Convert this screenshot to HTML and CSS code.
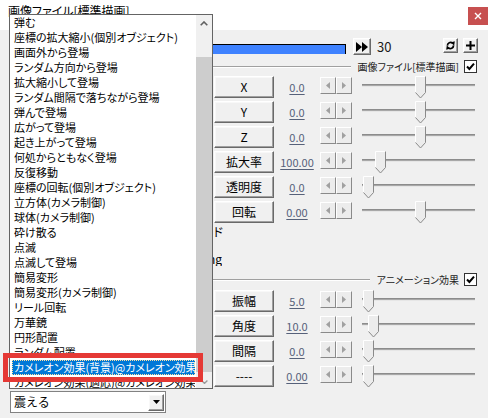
FILE: index.html
```html
<!DOCTYPE html>
<html lang="ja">
<head>
<meta charset="utf-8">
<title>画像ファイル[標準描画]</title>
<link rel="stylesheet" href="styles.css">
</head>
<body>
<div class="window">
  <div class="titlebar">
    <span class="title">画像ファイル[標準描画]</span>
    <div class="close"><svg width="8" height="8" viewBox="0 0 8 8"><path d="M1 1L7 7M7 1L1 7" stroke="#fff" stroke-width="1.4"/></svg></div>
  </div>
  <div class="content">
    <div class="tl-row">
      <div class="tl-bar"></div>
      <div class="raised ff"><svg width="12" height="10" viewBox="0 0 12 10"><polygon points="0,0 6,5 0,10" fill="#000"/><polygon points="6,0 12,5 6,10" fill="#000"/></svg></div>
      <span class="frame">30</span>
      <div class="spacer"></div>
      <div class="raised sbtn"><svg width="9" height="11" viewBox="0 0 9 11"><path d="M1.4 5.6A3.2 3.2 0 0 1 6.6 3.2" fill="none" stroke="#000" stroke-width="1.7"/><polygon points="4.6,2.6 8.8,1.2 8.2,5.4" fill="#000"/><path d="M7.6 5.4A3.2 3.2 0 0 1 2.4 7.8" fill="none" stroke="#000" stroke-width="1.7"/><polygon points="4.4,8.4 0.2,9.8 0.8,5.6" fill="#000"/></svg></div>
      <div class="raised sbtn plus"><svg width="9" height="9" viewBox="0 0 9 9"><path d="M4.5 0V9M0 4.5H9" stroke="#000" stroke-width="2"/></svg></div>
    </div>

    <div class="sep">
      <div class="sep-line"></div>
      <span class="sep-label">画像ファイル[標準描画]</span>
      <span class="check"><svg width="13" height="13" viewBox="0 0 13 13"><rect x="0.5" y="0.5" width="12" height="12" fill="#fff" stroke="#333"/><path d="M3 6.5L5.4 9L10 3.6" fill="none" stroke="#000" stroke-width="2"/></svg></span>
    </div>

    <div class="prow first">
      <div class="raised pbtn">X</div><span class="pval">0.0</span>
      <div class="arrows"><span class="arr"><svg width="4" height="7"><polygon points="4,0 0,3.5 4,7" fill="#a0a0a0"/></svg></span><span class="arr"><svg width="4" height="7"><polygon points="0,0 4,3.5 0,7" fill="#a0a0a0"/></svg></span></div>
      <div class="slider"><div class="track"></div><svg class="thumb" style="left:53px" width="11" height="23" viewBox="0 0 11 23"><polygon points="0.5,0.5 10.5,0.5 10.5,16.5 5.5,22 0.5,16.5" fill="#ececec"/><polyline points="0.5,16.5 0.5,0.5 10.5,0.5" fill="none" stroke="#fff"/><polyline points="10.5,0.5 10.5,16.5 5.5,22 0.5,16.5" fill="none" stroke="#8a8a8a"/></svg></div>
    </div>
    <div class="prow">
      <div class="raised pbtn">Y</div><span class="pval">0.0</span>
      <div class="arrows"><span class="arr"><svg width="4" height="7"><polygon points="4,0 0,3.5 4,7" fill="#a0a0a0"/></svg></span><span class="arr"><svg width="4" height="7"><polygon points="0,0 4,3.5 0,7" fill="#a0a0a0"/></svg></span></div>
      <div class="slider"><div class="track"></div><svg class="thumb" style="left:53px" width="11" height="23" viewBox="0 0 11 23"><polygon points="0.5,0.5 10.5,0.5 10.5,16.5 5.5,22 0.5,16.5" fill="#ececec"/><polyline points="0.5,16.5 0.5,0.5 10.5,0.5" fill="none" stroke="#fff"/><polyline points="10.5,0.5 10.5,16.5 5.5,22 0.5,16.5" fill="none" stroke="#8a8a8a"/></svg></div>
    </div>
    <div class="prow">
      <div class="raised pbtn">Z</div><span class="pval">0.0</span>
      <div class="arrows"><span class="arr"><svg width="4" height="7"><polygon points="4,0 0,3.5 4,7" fill="#a0a0a0"/></svg></span><span class="arr"><svg width="4" height="7"><polygon points="0,0 4,3.5 0,7" fill="#a0a0a0"/></svg></span></div>
      <div class="slider"><div class="track"></div><svg class="thumb" style="left:53px" width="11" height="23" viewBox="0 0 11 23"><polygon points="0.5,0.5 10.5,0.5 10.5,16.5 5.5,22 0.5,16.5" fill="#ececec"/><polyline points="0.5,16.5 0.5,0.5 10.5,0.5" fill="none" stroke="#fff"/><polyline points="10.5,0.5 10.5,16.5 5.5,22 0.5,16.5" fill="none" stroke="#8a8a8a"/></svg></div>
    </div>
    <div class="prow">
      <div class="raised pbtn">拡大率</div><span class="pval">100.00</span>
      <div class="arrows"><span class="arr"><svg width="4" height="7"><polygon points="4,0 0,3.5 4,7" fill="#a0a0a0"/></svg></span><span class="arr"><svg width="4" height="7"><polygon points="0,0 4,3.5 0,7" fill="#a0a0a0"/></svg></span></div>
      <div class="slider"><div class="track"></div><svg class="thumb" style="left:13px" width="11" height="23" viewBox="0 0 11 23"><polygon points="0.5,0.5 10.5,0.5 10.5,16.5 5.5,22 0.5,16.5" fill="#ececec"/><polyline points="0.5,16.5 0.5,0.5 10.5,0.5" fill="none" stroke="#fff"/><polyline points="10.5,0.5 10.5,16.5 5.5,22 0.5,16.5" fill="none" stroke="#8a8a8a"/></svg></div>
    </div>
    <div class="prow">
      <div class="raised pbtn">透明度</div><span class="pval">0.0</span>
      <div class="arrows"><span class="arr"><svg width="4" height="7"><polygon points="4,0 0,3.5 4,7" fill="#a0a0a0"/></svg></span><span class="arr"><svg width="4" height="7"><polygon points="0,0 4,3.5 0,7" fill="#a0a0a0"/></svg></span></div>
      <div class="slider"><div class="track"></div><svg class="thumb" style="left:1px" width="11" height="23" viewBox="0 0 11 23"><polygon points="0.5,0.5 10.5,0.5 10.5,16.5 5.5,22 0.5,16.5" fill="#ececec"/><polyline points="0.5,16.5 0.5,0.5 10.5,0.5" fill="none" stroke="#fff"/><polyline points="10.5,0.5 10.5,16.5 5.5,22 0.5,16.5" fill="none" stroke="#8a8a8a"/></svg></div>
    </div>
    <div class="prow">
      <div class="raised pbtn">回転</div><span class="pval">0.00</span>
      <div class="arrows"><span class="arr"><svg width="4" height="7"><polygon points="4,0 0,3.5 4,7" fill="#a0a0a0"/></svg></span><span class="arr"><svg width="4" height="7"><polygon points="0,0 4,3.5 0,7" fill="#a0a0a0"/></svg></span></div>
      <div class="slider"><div class="track"></div><svg class="thumb" style="left:53px" width="11" height="23" viewBox="0 0 11 23"><polygon points="0.5,0.5 10.5,0.5 10.5,16.5 5.5,22 0.5,16.5" fill="#ececec"/><polyline points="0.5,16.5 0.5,0.5 10.5,0.5" fill="none" stroke="#fff"/><polyline points="10.5,0.5 10.5,16.5 5.5,22 0.5,16.5" fill="none" stroke="#8a8a8a"/></svg></div>
    </div>

    <div class="trow t1"><span class="tbox">合成モード</span></div>
    <div class="trow t2"><span class="tbox tbox2">sample.png</span></div>

    <div class="sep sep2">
      <div class="sep-line"></div>
      <span class="sep-label">アニメーション効果</span>
      <span class="check"><svg width="13" height="13" viewBox="0 0 13 13"><rect x="0.5" y="0.5" width="12" height="12" fill="#fff" stroke="#333"/><path d="M3 6.5L5.4 9L10 3.6" fill="none" stroke="#000" stroke-width="2"/></svg></span>
    </div>

    <div class="prow first2">
      <div class="raised pbtn">振幅</div><span class="pval">5.0</span>
      <div class="arrows"><span class="arr"><svg width="4" height="7"><polygon points="4,0 0,3.5 4,7" fill="#a0a0a0"/></svg></span><span class="arr"><svg width="4" height="7"><polygon points="0,0 4,3.5 0,7" fill="#a0a0a0"/></svg></span></div>
      <div class="slider"><div class="track"></div><svg class="thumb" style="left:1px" width="11" height="23" viewBox="0 0 11 23"><polygon points="0.5,0.5 10.5,0.5 10.5,16.5 5.5,22 0.5,16.5" fill="#ececec"/><polyline points="0.5,16.5 0.5,0.5 10.5,0.5" fill="none" stroke="#fff"/><polyline points="10.5,0.5 10.5,16.5 5.5,22 0.5,16.5" fill="none" stroke="#8a8a8a"/></svg></div>
    </div>
    <div class="prow">
      <div class="raised pbtn">角度</div><span class="pval">10.0</span>
      <div class="arrows"><span class="arr"><svg width="4" height="7"><polygon points="4,0 0,3.5 4,7" fill="#a0a0a0"/></svg></span><span class="arr"><svg width="4" height="7"><polygon points="0,0 4,3.5 0,7" fill="#a0a0a0"/></svg></span></div>
      <div class="slider"><div class="track"></div><svg class="thumb" style="left:6px" width="11" height="23" viewBox="0 0 11 23"><polygon points="0.5,0.5 10.5,0.5 10.5,16.5 5.5,22 0.5,16.5" fill="#ececec"/><polyline points="0.5,16.5 0.5,0.5 10.5,0.5" fill="none" stroke="#fff"/><polyline points="10.5,0.5 10.5,16.5 5.5,22 0.5,16.5" fill="none" stroke="#8a8a8a"/></svg></div>
    </div>
    <div class="prow">
      <div class="raised pbtn">間隔</div><span class="pval">0.0</span>
      <div class="arrows"><span class="arr"><svg width="4" height="7"><polygon points="4,0 0,3.5 4,7" fill="#a0a0a0"/></svg></span><span class="arr"><svg width="4" height="7"><polygon points="0,0 4,3.5 0,7" fill="#a0a0a0"/></svg></span></div>
      <div class="slider"><div class="track"></div><svg class="thumb" style="left:1px" width="11" height="23" viewBox="0 0 11 23"><polygon points="0.5,0.5 10.5,0.5 10.5,16.5 5.5,22 0.5,16.5" fill="#ececec"/><polyline points="0.5,16.5 0.5,0.5 10.5,0.5" fill="none" stroke="#fff"/><polyline points="10.5,0.5 10.5,16.5 5.5,22 0.5,16.5" fill="none" stroke="#8a8a8a"/></svg></div>
    </div>
    <div class="prow">
      <div class="raised pbtn">----</div><span class="pval">0.00</span>
      <div class="arrows"><span class="arr"><svg width="4" height="7"><polygon points="4,0 0,3.5 4,7" fill="#a0a0a0"/></svg></span><span class="arr"><svg width="4" height="7"><polygon points="0,0 4,3.5 0,7" fill="#a0a0a0"/></svg></span></div>
      <div class="slider"><div class="track"></div><svg class="thumb" style="left:1px" width="11" height="23" viewBox="0 0 11 23"><polygon points="0.5,0.5 10.5,0.5 10.5,16.5 5.5,22 0.5,16.5" fill="#ececec"/><polyline points="0.5,16.5 0.5,0.5 10.5,0.5" fill="none" stroke="#fff"/><polyline points="10.5,0.5 10.5,16.5 5.5,22 0.5,16.5" fill="none" stroke="#8a8a8a"/></svg></div>
    </div>

    <div class="combo-row">
      <div class="combo">
        <span class="combo-text">震える</span>
        <span class="raised combo-btn"><svg width="7" height="4" viewBox="0 0 7 4"><polygon points="0,0 7,0 3.5,4" fill="#000"/></svg></span>
      </div>
    </div>
  </div>

  <div class="popup">
    <div class="list">
      <div class="item">弾む</div>
      <div class="item">座標の拡大縮小(個別オブジェクト)</div>
      <div class="item">画面外から登場</div>
      <div class="item">ランダム方向から登場</div>
      <div class="item">拡大縮小して登場</div>
      <div class="item">ランダム間隔で落ちながら登場</div>
      <div class="item">弾んで登場</div>
      <div class="item">広がって登場</div>
      <div class="item">起き上がって登場</div>
      <div class="item">何処からともなく登場</div>
      <div class="item">反復移動</div>
      <div class="item">座標の回転(個別オブジェクト)</div>
      <div class="item">立方体(カメラ制御)</div>
      <div class="item">球体(カメラ制御)</div>
      <div class="item">砕け散る</div>
      <div class="item">点滅</div>
      <div class="item">点滅して登場</div>
      <div class="item">簡易変形</div>
      <div class="item">簡易変形(カメラ制御)</div>
      <div class="item">リール回転</div>
      <div class="item">万華鏡</div>
      <div class="item">円形配置</div>
      <div class="item">ランダム配置</div>
      <div class="item sel">カメレオン効果(背景)@カメレオン効果</div>
      <div class="item">カメレオン効果(適応)@カメレオン効果</div>
    </div>
    <div class="sbar">
      <div class="sb-up"><svg width="8" height="5" viewBox="0 0 8 5"><polyline points="0.7,4.3 4,1 7.3,4.3" fill="none" stroke="#606060" stroke-width="1.6"/></svg></div>
      <div class="sb-thumb"></div>
      <div class="sb-down"><svg width="7" height="4" viewBox="0 0 7 4"><polyline points="0.6,0.6 3.5,3.4 6.4,0.6" fill="none" stroke="#9a9a9a" stroke-width="1.4"/></svg></div>
    </div>
  </div>

  <div class="annot"></div>
</div>
</body>
</html>
```

FILE: styles.css
```css
* { box-sizing: border-box; }

body {
  margin: 0;
  width: 488px;
  height: 418px;
  overflow: hidden;
  background: #f0f0f0;
  font-family: "Noto Sans CJK JP", "Noto Sans", sans-serif;
  color: #000;
}

.window {
  position: relative;
  width: 488px;
  height: 418px;
}

/* title bar */
.titlebar {
  height: 30px;
  background: #fff;
  display: flex;
  align-items: flex-start;
  justify-content: space-between;
}
.title {
  margin: 3px 0 0 8px;
  font-size: 12px;
  line-height: 16px;
  font-feature-settings: "palt";
}
.close {
  margin-top: 7px;
  width: 20px;
  height: 18px;
  background: #c75050;
  display: flex;
  align-items: center;
  justify-content: center;
}

.content {
  display: flex;
  flex-direction: column;
}

.raised {
  background: #f0f0f0;
  border: 1px solid;
  border-color: #fff #696969 #696969 #fff;
  box-shadow: inset -1px -1px 0 #a0a0a0, inset 1px 1px 0 #f8f8f8;
  display: flex;
  align-items: center;
  justify-content: center;
}

/* timeline row */
.tl-row {
  display: flex;
  align-items: flex-start;
  margin-top: 8px;
  height: 17px;
  padding: 0 10px 0 12px;
}
.tl-bar {
  width: 334px;
  height: 10px;
  margin-top: 6px;
  background: #3f82ff;
  border-top: 1px solid #000;
  border-right: 1px solid #000;
}
.ff {
  margin-left: 7px;
  width: 18px;
  height: 17px;
}
.frame {
  margin-left: 6px;
  font-size: 13px;
  line-height: 17px;
  color: #1a1a1a;
}
.spacer { flex: 1; }
.sbtn {
  width: 15px;
  height: 15px;
}
.plus { margin-left: 5px; }

/* group separators */
.sep {
  display: flex;
  align-items: center;
  height: 13px;
  margin-top: 5px;
  padding: 0 11px 0 12px;
}
.sep2 { margin-top: 7px; padding-left: 212px; }
.sep-line {
  flex: 1;
  height: 1px;
  background: #a0a0a0;
  box-shadow: 0 1px 0 #fff;
}
.sep-label {
  margin-left: 7px;
  font-size: 10px;
  line-height: 13px;
  white-space: nowrap;
  font-feature-settings: "palt";
  color: #222;
}
.check {
  margin-left: 5px;
  width: 13px;
  height: 13px;
  display: flex;
}

/* parameter rows */
.prow {
  display: flex;
  align-items: flex-start;
  height: 22px;
  margin-top: 3px;
  padding-left: 214px;
}
.prow.first { margin-top: 3px; }
.prow.first2 { margin-top: 4px; }
.pbtn {
  width: 60px;
  height: 22px;
  font-size: 12px;
  line-height: 20px;
  color: #000;
}
.pval {
  width: 46px;
  text-align: center;
  font-size: 11px;
  line-height: 22px;
  color: #56617a;
  text-decoration: underline;
  text-underline-offset: 2px;
}
.arrows {
  display: flex;
  margin-top: 1px;
}
.arr {
  width: 16px;
  height: 17px;
  background: #ececec;
  border: 1px solid;
  border-color: #fff #8a8a8a #8a8a8a #fff;
  display: flex;
  align-items: center;
  justify-content: center;
}
.arr svg { display: block; }
.slider {
  position: relative;
  margin-left: 10px;
  width: 113px;
  height: 22px;
}
.track {
  margin-top: 8px;
  height: 3px;
  background: #a8a8a8;
  border-top: 1px solid #8c8c8c;
  border-bottom: 1px solid #e6e6e6;
}
.thumb {
  position: absolute;
  top: 0;
}

/* text rows partly hidden by the popup */
.trow {
  display: flex;
  height: 14px;
  font-size: 12px;
  line-height: 14px;
}
.t1 { margin-top: 2px; }
.t2 { margin-top: 13px; }
.tbox {
  width: 223px;
  text-align: right;
  white-space: nowrap;
  overflow: hidden;
  font-feature-settings: "palt";
}
.tbox2 { width: 222px; }

/* combobox */
.combo-row {
  margin-top: 4px;
  padding-left: 10px;
}
.combo {
  width: 156px;
  height: 22px;
  background: #fff;
  border: 1px solid #828282;
  display: flex;
  align-items: center;
}
.combo-text {
  flex: 1;
  padding-left: 3px;
  font-size: 12px;
  line-height: 16px;
}
.combo-btn {
  width: 16px;
  height: 17px;
  margin-right: 1px;
}

/* dropdown popup */
.popup {
  position: absolute;
  left: 9px;
  top: 14px;
  width: 204px;
  height: 375px;
  border: 1px solid #646464;
  background: #fff;
  display: flex;
}
.list {
  flex: 1;
  padding: 0 1px 0 2px;
  overflow: hidden;
  font-size: 11px;
  line-height: 15px;
  font-feature-settings: "palt";
}
.item {
  height: 15px;
  padding-left: 2px;
  white-space: nowrap;
  overflow: hidden;
}
.item.sel {
  background: #0078d7;
  color: #fff;
  outline: 1px dotted #ffe0a0;
  outline-offset: -1px;
}
.sbar {
  width: 16px;
  background: #f0f0f0;
  display: flex;
  flex-direction: column;
}
.sb-up {
  height: 17px;
  display: flex;
  align-items: center;
  justify-content: center;
}
.sb-thumb {
  margin: 25px 0 0;
  height: 315px;
  background: #cdcdcd;
}
.sb-down {
  flex: 1;
  display: flex;
  align-items: center;
  justify-content: center;
  padding-top: 4px;
}

/* annotation */
.annot {
  position: absolute;
  left: 3px;
  top: 353px;
  width: 200px;
  height: 29px;
  border: 5px solid #e53935;
}
```
